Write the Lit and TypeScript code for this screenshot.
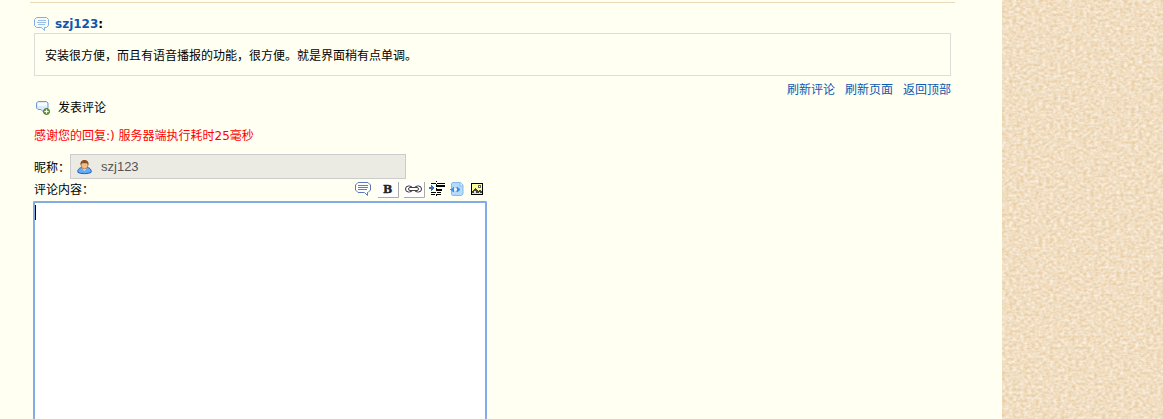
import { LitElement, html, css, svg } from "lit";
import { customElement } from "lit/decorators.js";

const speech = (stroke: string, lines: string) => svg`
  <path d="M2.5 1.500h10l2 2v6l-2 2h-2v3l-3-3h-5l-2-2v-6z" fill="#f4f9ff" stroke=${stroke}/>
  <path d="M4 4.500h8M3 6.500h9M4 8.500h7" stroke=${lines}/>`;

@customElement("app-root")
export class AppRoot extends LitElement {
  static styles = css`
    :host {
      display: grid;
      grid-template-columns: minmax(0, 1fr) 161px;
      height: 100vh;
      overflow: hidden;
      background: #fffff2;
      color: #000;
      font: 12px/18px "DejaVu Sans", "Noto Sans CJK SC", sans-serif;
    }
    * { box-sizing: border-box; }
    svg { display: block; flex: none; }
    main { padding: 2px 47px 0 30px; min-width: 0; }
    .inner { border-top: 1px solid #ecd9b5; padding: 12px 4px 0; }
    .author { display: flex; align-items: center; gap: 5px; height: 18px; }
    a { color: #0a59b0; text-decoration: none; }
    .name { font-weight: bold; }
    .comment { margin: 0; border: 1px solid #ddd; padding: 12px 10px; height: 43px; }
    .cjk { font-family: "Noto Sans CJK SC", sans-serif; }
    .links { display: flex; justify-content: flex-end; gap: 10px; margin-top: 4px; }
    .heading { display: flex; align-items: center; gap: 7px; margin: 1px 0 0; padding-left: 1px; font: inherit; height: 18px; }
    .status { margin: 10px 0 8px; color: #f00; }
    .row { display: flex; align-items: center; height: 27px; }
    .field {
      display: flex; align-items: center; gap: 9px;
      width: 336px; height: 25px; padding: 0 6px;
      border: 1px solid #ccc; background: #ebebe4;
    }
    .nick {
      flex: 1; min-width: 0; border: 0; padding: 0; background: none;
      color: #545454; font: 13px/18px "Liberation Sans", sans-serif;
    }
    .bar { display: flex; justify-content: space-between; width: 449px; height: 21px; }
    .tools { display: flex; align-items: center; height: 18px; }
    .tool { display: block; border: 0; padding: 0; background: none; }
    .quote { margin-right: 6px; }
    .boxed { margin-right: 4px; }
    .indent { margin-right: 4px; }
    .code { margin-right: 7px; }
    .text {
      display: block; width: 454px; height: 260px; margin: 0 -1px; padding: 2px;
      border: 2px solid #83abe8; border-radius: 1px; outline: 0; resize: none;
      font: 13px/16px "Liberation Sans", sans-serif; caret-color: transparent;
      background: linear-gradient(#000, #000) 0 2px / 1px 15px no-repeat #fff;
    }
    .paper { width: 100%; height: 100%; }
  `;

  render() {
    return html`
      <main>
        <div class="inner">
          <div class="author">
            <svg width="16" height="16" viewBox="0 0 16 16" fill="none">${speech("#83b0df", "#9bc0e8")}</svg>
            <span class="name"><a href="#">szj123</a>:</span>
          </div>
          <p class="comment cjk">安装很方便，而且有语音播报的功能，很方便。就是界面稍有点单调。</p>
          <nav class="links cjk"><a href="#">刷新评论</a><a href="#">刷新页面</a><a href="#">返回顶部</a></nav>
          <h2 class="heading cjk">
            <svg width="16" height="16" viewBox="0 0 16 16" fill="none">
              <path d="M3 1.500h8.500l1.500 1.500v5l-1.500 1.500H10v4l-4-4H3L1.500 8V3z" fill="#dceafb" stroke="#6b9bd0"/>
              <path d="M3 3h9v3H3z" fill="#f7fbff"/>
              <circle cx="11.500" cy="11.500" r="3" fill="#72aa42" stroke="#47752c"/>
              <path d="M11.500 9.500v4M9.500 11.500h4" stroke="#fff"/>
            </svg>
            发表评论
          </h2>
          <p class="status">感谢您的回复:) 服务器端执行耗时25毫秒</p>
          <div class="row">
            <label class="cjk" for="nick">昵称：</label>
            <div class="field">
              <svg width="15" height="16" viewBox="0 0 15 16">
                <path d="M1 13.500C0 11 2.500 8.500 5 8.500h5c3 0 5 3 4 5-3 1.500-10 1.500-13 0z" fill="#62adfb" stroke="#285eaf"/>
                <path d="M5 9l2.500 3L10 9z" fill="#e2f1ff"/>
                <ellipse cx="7.500" cy="6" rx="3.500" ry="4" fill="#f1bd89" stroke="#9b673c" stroke-width=".7"/>
                <path d="M3.500 6C3 2.500 5 1 7.500 1S12 2.500 11.500 6L10 4.200H5z" fill="#8c4e20"/>
              </svg>
              <input class="nick" id="nick" value="szj123" disabled />
            </div>
          </div>
          <div class="bar">
            <label class="cjk" for="text">评论内容：</label>
            <div class="tools">
              <button class="tool quote" aria-label="引用">
                <svg width="16" height="16" viewBox="0 0 16 16" fill="none">
                  <path d="M3 1.500h10L15.500 4v5L13 11.500h-.5v3l-3-3H3L.5 9V4z" fill="#fff" stroke="#5c78b7"/>
                  <path d="M3 4.500h10M3 6.500h10M3 8.500h9" stroke="#777b9a"/>
                </svg>
              </button>
              <button class="tool boxed" aria-label="加粗">
                <svg width="22" height="17" viewBox="0 0 22 17">
                  <path d="M0 0h21v16H0z" fill="#fff"/><path d="M21.500 1v15.500H1" fill="none" stroke="#aaa"/>
                  <text x="6" y="12" font-family="DejaVu Serif, serif" font-weight="bold" font-size="11" fill="#222" stroke="#222" stroke-width=".4">B</text>
                </svg>
              </button>
              <button class="tool boxed" aria-label="链接">
                <svg width="22" height="17" viewBox="0 0 22 17" fill="none">
                  <path d="M0 0h21v16H0z" fill="#fff"/><path d="M21.500 1v15.500H1" stroke="#aaa"/>
                  <rect x="2.500" y="5" width="7" height="6" rx="3" stroke="#333"/>
                  <rect x="11.500" y="5" width="7" height="6" rx="3" stroke="#333"/>
                  <path d="M6 8h9" stroke="#fff" stroke-width="3"/>
                  <rect x="5.500" y="6.500" width="10" height="3" rx="1.500" stroke="#444"/>
                </svg>
              </button>
              <button class="tool indent" aria-label="缩进">
                <svg width="17" height="16" viewBox="0 0 17 16" fill="none" shape-rendering="crispEdges">
                  <path d="M2 2.500h5M8 2.500h8M2 11.500h5M8 11.500h4M2 13.500h4M8 13.500h4" stroke="#000"/>
                  <path d="M7.500 0v1M7.500 3v1M7.500 5v1M7.500 7v1M7.500 9v1M7.500 13v2" stroke="#000"/>
                  <path d="M7 5h9M7 9h6" stroke="#000" stroke-width="2"/>
                  <path d="M0 7h4" stroke="#2d70c8" stroke-width="2"/><path d="M2 4l4 3-4 3z" fill="#2d70c8"/>
                </svg>
              </button>
              <button class="tool code" aria-label="代码">
                <svg width="14" height="16" viewBox="0 0 14 16" fill="none">
                  <path d="M2.500 1.500h8L13 4v9l-1.500 1.500h-9L1.500 13V3z" fill="#b7dafa" stroke="#83b9ec"/>
                  <path d="M10 1v4h3" fill="#eaf5ff" stroke="#83b9ec"/>
                  <path d="M0 8.500h3M3.500 6v5L1 8.500M7 6v5l3-2.500z" fill="#398de6" stroke="#398de6"/>
                  <path d="M4 8.500h3" stroke="#fff" stroke-width="2"/>
                </svg>
              </button>
              <button class="tool" aria-label="图片">
                <svg width="12" height="12" viewBox="0 0 12 12" fill="none" shape-rendering="crispEdges">
                  <path d="M.5.5h11v11H.5z" fill="#fffca0" stroke="#000"/>
                  <path d="M1 8l3-3 3 3 2-1 2 2v2H1z" fill="#444"/>
                  <path d="M1 10h2V8h2v2h3V9h1v1h2v1H1z" fill="#ddd"/>
                  <path d="M7.500 2.500h2v2h-2z" fill="#fff" stroke="#666"/>
                </svg>
              </button>
            </div>
          </div>
          <textarea class="text" id="text"></textarea>
        </div>
      </main>
      <svg class="paper" aria-hidden="true">
        <filter id="grain" x="0" y="0" width="100%" height="100%" color-interpolation-filters="sRGB">
          <feTurbulence type="fractalNoise" baseFrequency=".27 .36" numOctaves="2" seed="4"/>
          <feColorMatrix values=".11 0 0 0 .89  .22 0 0 0 .76  .4 0 0 0 .56  0 0 0 0 1"/>
        </filter>
        <rect width="100%" height="100%" fill="#f1dfc1" filter="url(#grain)"/>
      </svg>
    `;
  }
}
